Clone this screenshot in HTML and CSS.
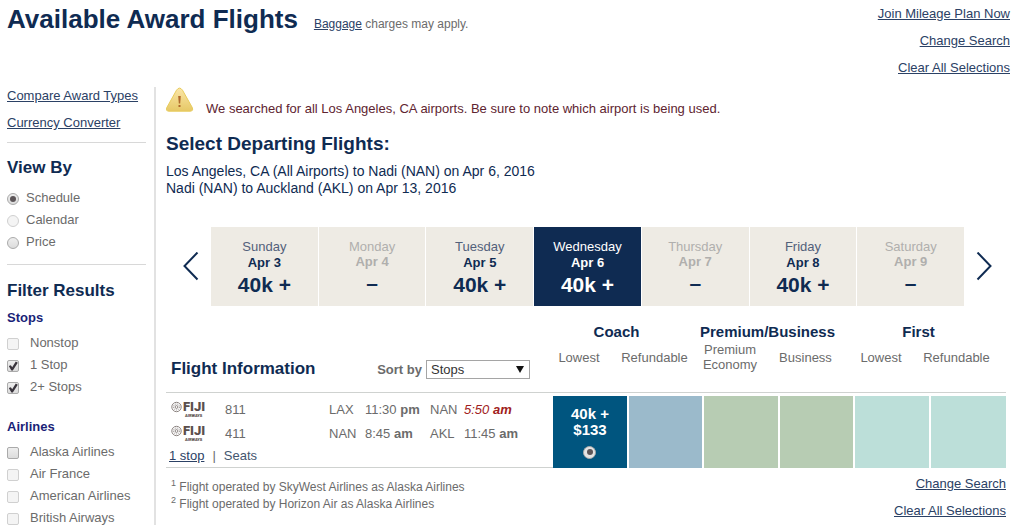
FILE: index.html
```html
<!DOCTYPE html>
<html lang="en">
<head>
    <meta charset="utf-8">
    <title>Available Award Flights</title>
    <link rel="stylesheet" href="styles.css">
</head>
<body>
    <header class="page-header">
        <h1>Available Award Flights</h1>
        <p class="baggage"><a href="#">Baggage</a> charges may apply.</p>
        <nav class="page-links">
            <a href="#">Join Mileage Plan Now</a>
            <a href="#">Change Search</a>
            <a href="#">Clear All Selections</a>
        </nav>
    </header>

    <div class="layout">
        <aside class="sidebar">
            <nav class="tools">
                <a href="#">Compare Award Types</a>
                <a href="#">Currency Converter</a>
            </nav>

            <section class="view-by">
                <h2>View By</h2>
                <label class="option"><input type="radio" name="view" checked> Schedule</label>
                <label class="option"><input type="radio" name="view" disabled> Calendar</label>
                <label class="option"><input type="radio" name="view"> Price</label>
            </section>

            <section class="filters">
                <h2>Filter Results</h2>
                <h3>Stops</h3>
                <div class="filter-group">
                    <label class="option"><input type="checkbox" disabled> Nonstop</label>
                    <label class="option"><input type="checkbox" checked> 1 Stop</label>
                    <label class="option"><input type="checkbox" checked> 2+ Stops</label>
                </div>
                <h3>Airlines</h3>
                <div class="filter-group">
                    <label class="option"><input type="checkbox"> Alaska Airlines</label>
                    <label class="option"><input type="checkbox" disabled> Air France</label>
                    <label class="option"><input type="checkbox" disabled> American Airlines</label>
                    <label class="option"><input type="checkbox" disabled> British Airways</label>
                </div>
            </section>
        </aside>

        <main class="results">
            <div class="notice">
                <svg width="28" height="26" viewBox="0 0 28 26">
                    <defs>
                        <linearGradient id="warn" x1="0" y1="0" x2="0" y2="1">
                            <stop offset="0" stop-color="#fbe6a8"/>
                            <stop offset="1" stop-color="#e6c866"/>
                        </linearGradient>
                    </defs>
                    <path d="M10.5 3.2Q13.5 -1 16.5 3.2L26.3 20.6Q27.5 24 24.5 24.2H2.5Q-.5 24 .8 20.6Z" fill="url(#warn)" stroke="#e8cc5c"/>
                    <path d="M12.2 9H14.8L14.2 16.5H12.8Z" fill="#b06a2c"/>
                    <rect x="12.5" y="18" width="2" height="2" fill="#b06a2c"/>
                </svg>
                <p>We searched for all Los Angeles, CA airports. Be sure to note which airport is being used.</p>
            </div>

            <h2 class="departing">Select Departing Flights:</h2>
            <p class="trip">
                Los Angeles, CA (All Airports) to Nadi (NAN) on Apr 6, 2016<br>
                Nadi (NAN) to Auckland (AKL) on Apr 13, 2016
            </p>

            <div class="calendar">
                <button class="arrow" type="button" aria-label="Previous week">
                    <svg width="16" height="30" viewBox="0 0 16 30"><path d="M14.5 .5L1.5 14L14.5 27.5"/></svg>
                </button>
                <div class="days">
                    <button class="day" type="button"><span>Sunday</span><b>Apr 3</b><strong>40k +</strong></button>
                    <button class="day none" type="button" disabled><span>Monday</span><b>Apr 4</b><strong>–</strong></button>
                    <button class="day" type="button"><span>Tuesday</span><b>Apr 5</b><strong>40k +</strong></button>
                    <button class="day selected" type="button"><span>Wednesday</span><b>Apr 6</b><strong>40k +</strong></button>
                    <button class="day none" type="button" disabled><span>Thursday</span><b>Apr 7</b><strong>–</strong></button>
                    <button class="day" type="button"><span>Friday</span><b>Apr 8</b><strong>40k +</strong></button>
                    <button class="day none" type="button" disabled><span>Saturday</span><b>Apr 9</b><strong>–</strong></button>
                </div>
                <button class="arrow" type="button" aria-label="Next week">
                    <svg width="16" height="30" viewBox="0 0 16 30"><path d="M1.5 .5L14.5 14L1.5 27.5"/></svg>
                </button>
            </div>

            <table class="flights">
                <colgroup>
                    <col>
                    <col class="fare-first"><col class="fare-second">
                    <col class="fare-first"><col class="fare-second">
                    <col class="fare-first"><col class="fare-second">
                </colgroup>
                <thead>
                    <tr class="cabins">
                        <th rowspan="2" class="info-head">
                            <div class="info-bar">
                                <h2>Flight Information</h2>
                                <label for="sort">Sort by</label>
                                <span class="select-box">
                                    <select id="sort">
                                        <option>Stops</option>
                                        <option>Price</option>
                                    </select>
                                </span>
                            </div>
                        </th>
                        <th colspan="2"><span class="head">Coach</span></th>
                        <th colspan="2"><span class="head">Premium/Business</span></th>
                        <th colspan="2"><span class="head">First</span></th>
                    </tr>
                    <tr class="fares">
                        <th><span class="head">Lowest</span></th>
                        <th><span class="head">Refundable</span></th>
                        <th><span class="head">Premium<br>Economy</span></th>
                        <th><span class="head">Business</span></th>
                        <th><span class="head">Lowest</span></th>
                        <th><span class="head">Refundable</span></th>
                    </tr>
                </thead>
                <tbody>
                    <tr>
                        <td class="itinerary">
                            <div class="leg">
                                <svg class="logo" width="38" height="20" viewBox="0 0 38 20">
                                    <circle cx="5.5" cy="8" r="4.7"/>
                                    <circle cx="5.5" cy="8" r="1.4"/>
                                    <circle cx="5.5" cy="8" r="3" stroke-dasharray="1 1"/>
                                    <text class="logo-name" x="12" y="12">FIJI</text>
                                    <text class="logo-sub" x="14" y="18">AIRWAYS</text>
                                </svg>
                                <span>811</span>
                                <span>LAX</span>
                                <span>11:30 <b>pm</b></span>
                                <span>NAN</span>
                                <span class="next-day">5:50 <b>am</b></span>
                            </div>
                            <div class="leg">
                                <svg class="logo" width="38" height="20" viewBox="0 0 38 20">
                                    <circle cx="5.5" cy="8" r="4.7"/>
                                    <circle cx="5.5" cy="8" r="1.4"/>
                                    <circle cx="5.5" cy="8" r="3" stroke-dasharray="1 1"/>
                                    <text class="logo-name" x="12" y="12">FIJI</text>
                                    <text class="logo-sub" x="14" y="18">AIRWAYS</text>
                                </svg>
                                <span>411</span>
                                <span>NAN</span>
                                <span>8:45 <b>am</b></span>
                                <span>AKL</span>
                                <span>11:45 <b>am</b></span>
                            </div>
                            <div class="leg-links">
                                <a href="#">1 stop</a><span>|</span><a href="#" class="seats">Seats</a>
                            </div>
                        </td>
                        <td class="fare chosen">
                            <label>40k +<br>$133<input type="radio" name="fare" checked></label>
                        </td>
                        <td class="fare coach"></td>
                        <td class="fare business"></td>
                        <td class="fare business"></td>
                        <td class="fare first"></td>
                        <td class="fare first"></td>
                    </tr>
                </tbody>
            </table>

            <footer class="results-footer">
                <p><sup>1</sup> Flight operated by SkyWest Airlines as Alaska Airlines<br>
                <sup>2</sup> Flight operated by Horizon Air as Alaska Airlines</p>
                <nav class="page-links">
                    <a href="#">Change Search</a>
                    <a href="#">Clear All Selections</a>
                </nav>
            </footer>
        </main>
    </div>
</body>
</html>
```
FILE: styles.css
```css
* {
    box-sizing: border-box;
}
body {
    margin: 0;
    font-family: "Liberation Sans", Arial, sans-serif;
    font-size: 13px;
    color: #6b6b6b;
    background: #fff;
    overflow-x: hidden;
}
h1, h2, h3, p {
    margin: 0;
    color: #0f2b52;
}
a {
    color: #2b4165;
}

/* header */
.page-header {
    display: flex;
    align-items: flex-start;
    padding: 0 14px 0 7px;
    height: 87px;
}
h1 {
    font-size: 26px;
    line-height: 38px;
}
.baggage {
    margin-left: 16px;
    padding-top: 10px;
    font-size: 12px;
    line-height: 28px;
    color: #6b6b6b;
}
.page-links {
    display: flex;
    flex-direction: column;
    align-items: flex-end;
    margin-left: auto;
    line-height: 27px;
}

.layout {
    display: flex;
}

/* sidebar */
.sidebar {
    flex: none;
    width: 156px;
    padding: 0 8px 0 7px;
    border-right: 2px solid #e2e2e2;
}
.tools {
    display: flex;
    flex-direction: column;
    line-height: 27px;
    margin-top: -5px;
    padding-bottom: 6px;
    border-bottom: 1px solid #d8d8d8;
}
.view-by {
    padding: 10px 0 11px;
    border-bottom: 1px solid #d8d8d8;
}
h2 {
    font-size: 17px;
    line-height: 30px;
}
.view-by h2 {
    margin-bottom: 4px;
}
.filters {
    padding-top: 11px;
}
h3 {
    font-size: 13px;
    line-height: 24px;
    color: #1a1f78;
}
.filter-group {
    padding: 2px 0 17px;
}
.option {
    display: flex;
    align-items: center;
    line-height: 22px;
    height: 22px;
}
.option input {
    margin: 2px 7px 0 0;
}
.option input[type="checkbox"] {
    margin-right: 11px;
}

/* form controls */
input {
    appearance: none;
    display: grid;
    place-items: center;
    width: 12px;
    height: 12px;
    border: 1px solid #aaa;
    background: linear-gradient(#eee, #dcdcdc);
}
input[type="checkbox"] {
    border-radius: 2px;
}
input[type="radio"] {
    border-radius: 50%;
}
input:disabled {
    border-color: #d0d0d0;
    background: #f4f4f4;
}
input[type="radio"]:checked::after {
    content: "";
    width: 6px;
    height: 6px;
    border-radius: 50%;
    background: #5c5558;
}
input[type="checkbox"]:checked::after {
    content: "";
    width: 10px;
    height: 10px;
    background: #39343c;
    clip-path: polygon(8% 50%, 28% 42%, 42% 62%, 78% 5%, 98% 18%, 48% 96%, 34% 96%);
}
button {
    border: 0;
    padding: 0;
    background: none;
    font: inherit;
    color: inherit;
    cursor: pointer;
}

/* results */
.results {
    flex: 1;
    min-width: 0;
    padding: 0 18px 0 10px;
}
.notice {
    display: flex;
    align-items: flex-start;
    gap: 12px;
    height: 30px;
}
.notice p {
    padding-top: 14px;
    line-height: 16px;
    color: #5e2430;
}
.departing {
    margin-top: 11px;
    font-size: 19px;
    line-height: 32px;
}
.trip {
    padding: 3px 0 30px;
    font-size: 14px;
    line-height: 17px;
}
.calendar {
    display: flex;
    align-items: center;
    gap: 12px;
    padding: 0 14px 0 17px;
}
.arrow svg {
    display: block;
    fill: none;
    stroke: #0f2b52;
    stroke-width: 2;
}
.days {
    display: flex;
    flex: 1;
    gap: 1px;
}
.day {
    display: flex;
    flex: 1;
    flex-direction: column;
    align-items: center;
    height: 79px;
    padding-top: 12px;
    background: #eeebe4;
    color: #0f2b52;
    line-height: 16px;
}
.day span {
    color: #52607a;
}
.day strong {
    font-size: 21px;
    line-height: 27px;
}
.none span,
.none b {
    color: #b0afad;
    line-height: 15px;
}
.none strong {
    color: #0f2b52;
}
.day.selected,
.day.selected span {
    background: #0f2b52;
    color: #fff;
}

/* flight table */
.flights {
    width: 100%;
    margin-top: 14px;
    table-layout: fixed;
    border-collapse: separate;
    border-spacing: 0;
}
.fare-first {
    width: 76px;
}
.fare-second {
    width: 75px;
}
th, td {
    padding: 0;
}
/* headings sit a little left of the fare columns */
.head {
    display: block;
    margin-left: -24px;
}
.cabins th {
    height: 22px;
    font-size: 15px;
    color: #0f2b52;
}
.fares th {
    height: 47px;
    padding-bottom: 20px;
    font-weight: normal;
    line-height: 15px;
    border-bottom: 1px solid #cfd2d0;
}
.cabins .info-head {
    vertical-align: bottom;
    text-align: left;
    font-size: 13px;
    color: #6b6b6b;
    border-bottom: 1px solid #cfd2d0;
}
.info-bar {
    display: flex;
    align-items: center;
    padding: 0 23px 8px 5px;
}
.info-bar h2 {
    margin-right: auto;
}
.select-box {
    position: relative;
    margin-left: 4px;
}
.select-box::after {
    content: "";
    position: absolute;
    top: 6px;
    right: 6px;
    border: 4px solid transparent;
    border-top: 7px solid #111;
    border-bottom: 0;
    pointer-events: none;
}
select {
    appearance: none;
    display: block;
    width: 104px;
    height: 19px;
    padding: 0 4px;
    border: 1px solid #a5a5a5;
    border-radius: 0;
    background: #fff;
    font: inherit;
    font-weight: normal;
    color: #333;
}
.itinerary {
    padding-top: 4px;
    border-bottom: 1px solid #cfd2d0;
}
.leg {
    display: grid;
    grid-template-columns: 54px 104px 36px 65px 34px 1fr;
    align-items: center;
    height: 24px;
    padding-left: 5px;
}
.logo {
    fill: none;
    stroke: #8b8380;
}
.logo text {
    fill: #5b4f4c;
    stroke: none;
    font-family: Roboto, sans-serif;
    font-weight: 900;
}
.logo-name {
    font-size: 13px;
}
.logo-sub {
    font-size: 4px;
}
.next-day {
    color: #a02020;
    font-style: italic;
}
.leg-links {
    display: flex;
    gap: 8px;
    padding-left: 3px;
    line-height: 22px;
}
.seats {
    text-decoration: none;
    color: #44566f;
}
.fare {
    border-top: 3px solid #fff;
    border-right: 2px solid #fff;
    background-clip: padding-box;
}
.fare:last-child {
    border-right: 0;
}
.chosen {
    background-color: #00557f;
    color: #fff;
    font-size: 15px;
    font-weight: bold;
    line-height: 16px;
    text-align: center;
}
.chosen input {
    width: 13px;
    height: 13px;
    margin: 8px auto 0;
    background: #e4e4e4;
}
.coach {
    background-color: #9bbacb;
}
.business {
    background-color: #b7ccb3;
}
.first {
    background-color: #bcdfd9;
}

.results-footer {
    display: flex;
    padding-top: 2px;
}
.results-footer p {
    padding: 9px 0 0 5px;
    font-size: 12px;
    line-height: 17px;
    color: #6b6b6b;
}
sup {
    font-size: 9px;
    line-height: 1px;
}
```
